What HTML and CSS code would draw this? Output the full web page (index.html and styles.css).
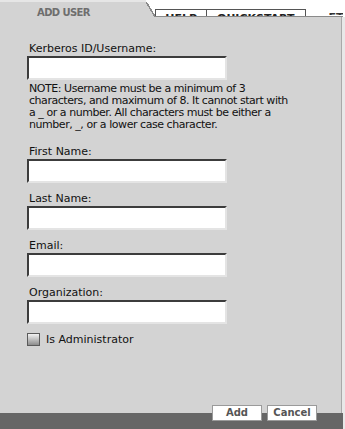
FILE: index.html
```html
<!DOCTYPE html>
<html lang="en">
<head>
<meta charset="utf-8">
<title>Add User</title>
<link rel="stylesheet" href="styles.css">
</head>
<body>
<div class="page">
  <div class="tabs">
    <div class="tab-active">ADD USER</div>
    <div class="tab-slant"></div>
    <div class="tab-rest">
      <div class="tab tab-help">HELP</div>
      <div class="tab tab-quick">QUICKSTART</div>
      <div class="tab-ghost">ET</div>
    </div>
  </div>
  <div class="main">
    <form class="panel">
      <div class="label">Kerberos ID/Username:</div>
      <input class="field" type="text">
      <div class="note">NOTE: Username must be a minimum of 3<br>characters, and maximum of 8. It cannot start with<br>a _ or a number. All characters must be either a<br>number, _, or a lower case character.</div>

      <div class="label label-first">First Name:</div>
      <input class="field" type="text">

      <div class="label label-next">Last Name:</div>
      <input class="field" type="text">

      <div class="label label-next">Email:</div>
      <input class="field" type="text">

      <div class="label label-next">Organization:</div>
      <input class="field" type="text">

      <label class="check-row"><span class="checkbox"></span><span>Is Administrator</span></label>
    </form>
    <div class="footer">
      <button class="btn" type="button">Add</button>
      <button class="btn" type="button">Cancel</button>
    </div>
  </div>
</div>
</body>
</html>
```

FILE: styles.css
```css
html, body {
  margin: 0;
  padding: 0;
  background: #ffffff;
}

body {
  font-family: "DejaVu Sans", Verdana, sans-serif;
  font-size: 11px;
  color: #111111;
}

.page {
  width: 345px;
  height: 429px;
  display: flex;
  flex-direction: column;
  overflow: hidden;
}

.tabs {
  display: flex;
  height: 17px;
  flex: none;
}

.tab-active {
  width: 146px;
  height: 17px;
  box-sizing: border-box;
  background: #d3d3d3;
  border-top: 2px solid #e6e6e6;
  padding: 5px 0 0 37px;
  font-size: 10px;
  font-weight: bold;
  line-height: 12px;
  letter-spacing: -0.6px;
  color: #6e6e6e;
  overflow: hidden;
  white-space: nowrap;
}

.tab-slant {
  width: 9px;
  height: 15px;
  align-self: flex-end;
  background: linear-gradient(to top right, #d3d3d3 46%, #8a8a8a 46%, #8a8a8a 56%, #ffffff 56%);
}

.tab-rest {
  width: 188px;
  display: flex;
  align-items: flex-end;
  border-bottom: 1px solid #8a8a8a;
}

.tab {
  height: 7px;
  box-sizing: border-box;
  border: 1px solid #555555;
  border-bottom: none;
  background: #ffffff;
  overflow: hidden;
  font-size: 11px;
  font-weight: bold;
  line-height: 11px;
  padding-top: 3px;
  text-align: center;
  color: #222222;
}

.tab-help {
  width: 54px;
}

.tab-quick {
  width: 102px;
  border-left: none;
}

.tab-ghost {
  height: 3px;
  overflow: hidden;
  margin-left: 23px;
  font-size: 11px;
  font-weight: bold;
  line-height: 11px;
  color: #333333;
  align-self: flex-end;
  margin-bottom: 1px;
}

.main {
  flex: 1;
  display: flex;
  flex-direction: column;
  background: #e8e8e8;
}

.panel {
  margin: 0;
  width: 342px;
  flex: 1;
  background: #d3d3d3;
  border-right: 1px solid #a9a9a9;
  padding: 26px 0 0 27px;
  box-sizing: border-box;
}

.label {
  margin-left: 2px;
  line-height: 12px;
  white-space: nowrap;
}

.label-first {
  margin-top: 15px;
}

.label-next {
  margin-top: 10px;
}

.field {
  display: block;
  width: 200px;
  height: 24px;
  box-sizing: border-box;
  margin: 1px 0 0 0;
  padding: 0 3px;
  background: #ffffff;
  border-top: 2px solid #3c3c3c;
  border-left: 2px solid #3c3c3c;
  border-right: 2px solid #e4e4e4;
  border-bottom: 2px solid #e4e4e4;
  font-family: "DejaVu Sans", Verdana, sans-serif;
  font-size: 11px;
  outline: none;
}

.note {
  margin: 3px 0 0 2px;
  line-height: 12px;
  letter-spacing: -0.45px;
  white-space: nowrap;
}

.check-row {
  display: flex;
  align-items: center;
  gap: 6px;
  margin-top: 9px;
  height: 13px;
  line-height: 12px;
}

.checkbox {
  width: 13px;
  height: 13px;
  box-sizing: border-box;
  border: 1px solid #5a5a5a;
  background: linear-gradient(to bottom, #f2f2f2, #8c8c8c);
  flex: none;
}

.footer {
  flex: none;
  width: 343px;
  height: 16px;
  background: #666666;
  display: flex;
  justify-content: flex-end;
  gap: 5px;
  padding-right: 26px;
  box-sizing: border-box;
}

.btn {
  width: 50px;
  height: 16px;
  margin-top: -8px;
  padding: 0;
  border: 1px solid #9a9a9a;
  background: #ffffff;
  font-family: "DejaVu Sans", Verdana, sans-serif;
  font-size: 10px;
  font-weight: bold;
  color: #555555;
  line-height: 14px;
}
```
